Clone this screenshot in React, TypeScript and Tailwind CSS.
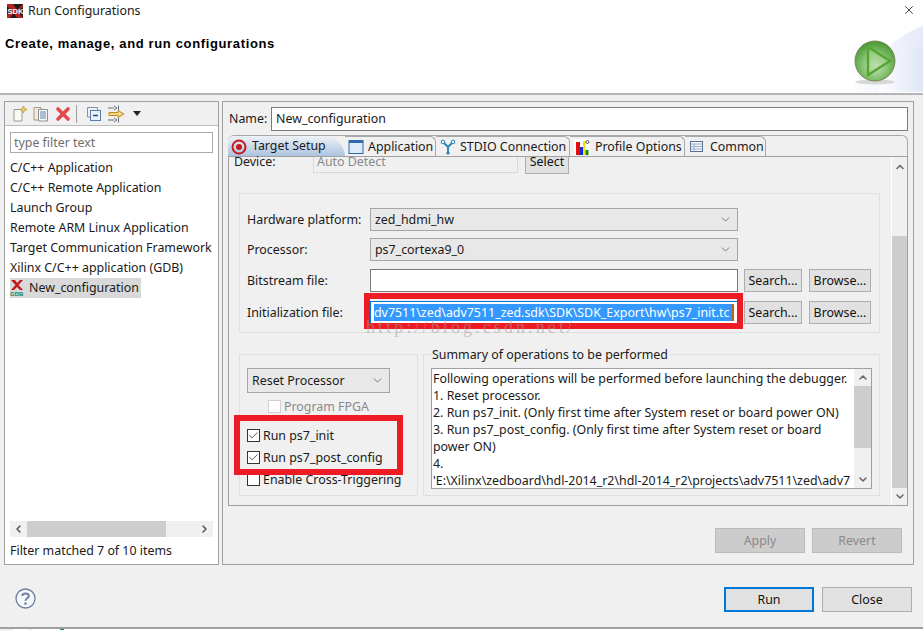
import React from 'react';
import { Check, ChevronDown, ChevronUp, ChevronLeft, ChevronRight, X } from 'lucide-react';

const btn = 'flex items-center justify-center border border-[#adadad] bg-[#e1e1e1] text-[#111] pt-[2px]';
const dimBtn = 'w-[90px] h-[25px] flex items-center justify-center border border-[#bcbcbc] bg-[#cccccc] text-[#8a8a8a] pt-[2px]';

function Field({ label, children }: { label: string; children: React.ReactNode }) {
  return (
    <div className="flex items-center h-[23px]">
      <span className="w-[123px] shrink-0 pt-[2px]">{label}</span>
      {children}
    </div>
  );
}

function Combo({ value, className }: { value: string; className: string }) {
  return (
    <div className={`flex items-center justify-between border border-[#a5a5a5] bg-[#e8e8e8] pl-[4px] pr-[5px] ${className}`}>
      <span className="pt-[2px]">{value}</span>
      <ChevronDown size={13} strokeWidth={1.4} className="text-[#555]" />
    </div>
  );
}

function Box({ checked, disabled }: { checked?: boolean; disabled?: boolean }) {
  return (
    <span className={`flex items-center justify-center w-[13px] h-[13px] shrink-0 border bg-white ${disabled ? 'border-[#d0d0d0]' : 'border-[#333]'}`}>
      {checked && <Check size={11} strokeWidth={1.8} className="text-[#333]" />}
    </span>
  );
}

function Tab({ className, icon, label }: { className: string; icon: React.ReactNode; label: string }) {
  return (
    <div className={`flex items-center h-[21px] shrink-0 whitespace-nowrap border-r border-t border-[#a8a8a8] rounded-tr-[6px] ${className}`}>
      {icon}
      <span>{label}</span>
    </div>
  );
}

function SdkIcon() {
  return (
    <svg width="16" height="16" viewBox="0 0 16 16">
      <rect x="0" y="1" width="16" height="14" fill="#1c1c1c" />
      <path d="M0 1 L6 1 L10 7 L16 1 L16 4 L11 8 L16 15 L10 15 L7 10 L3 15 L0 15 L0 12 L5 8 L0 3 Z" fill="#b4231c" />
      <text x="0.5" y="11" fontSize="7.5" fontWeight="700" fill="#fff" fontFamily="Liberation Sans, sans-serif">SDK</text>
    </svg>
  );
}

function PlayBanner() {
  return (
    <svg width="75" height="66" viewBox="0 0 75 66" className="block">
      <defs>
        <radialGradient id="orb" cx="50%" cy="62%" r="60%">
          <stop offset="0%" stopColor="#cfe8c4" />
          <stop offset="55%" stopColor="#83c070" />
          <stop offset="100%" stopColor="#4c9a33" />
        </radialGradient>
        <linearGradient id="wash" x1="0" y1="0" x2="1" y2="0">
          <stop offset="0%" stopColor="#ffffff" />
          <stop offset="100%" stopColor="#dfe5f6" />
        </linearGradient>
      </defs>
      <path d="M0 66 C20 40 45 10 75 0 L75 66 Z" fill="url(#wash)" opacity="0.8" />
      <path d="M30 66 C40 35 55 22 75 21 L75 66 Z" fill="url(#wash)" />
      <ellipse cx="27" cy="56" rx="20" ry="2.5" fill="#d8d8d8" />
      <circle cx="27" cy="35" r="20" fill="url(#orb)" stroke="#7b8a58" strokeWidth="1" />
      <path d="M20 21 L20 49 L42 35 Z" fill="#a9d698" fillOpacity="0.5" stroke="#55a52f" strokeWidth="2.4" />
    </svg>
  );
}

function TopIcons() {
  return (
    <div className="flex items-center h-[24px] pl-[6px] bg-[#f0f0f0] border-b border-[#bdbdbd]">
      <svg width="18" height="18" viewBox="0 0 18 18">
        <path d="M3 4.5 H11 V16 H3 Z" fill="#fbfbf2" stroke="#9a9a88" />
        <path d="M12.5 1 L13.5 3.5 L16 4.5 L13.5 5.5 L12.5 8 L11.5 5.5 L9 4.5 L11.5 3.5 Z" fill="#f3d35a" stroke="#b08a22" strokeWidth="0.7" />
      </svg>
      <svg width="18" height="18" viewBox="0 0 18 18" className="ml-[3px]">
        <path d="M2 2.5 H9 V15 H2 Z" fill="#f3ecd9" stroke="#a39a80" />
        <path d="M6.5 4.5 H15.5 V16 H6.5 Z" fill="#fbfbf6" stroke="#8c8f95" />
        <path d="M8 7 H14 M8 9 H14 M8 11 H14 M8 13 H14" stroke="#5a7fb8" />
      </svg>
      <svg width="16" height="16" viewBox="0 0 16 16" className="ml-[5px]">
        <path d="M3 3 L13 13 M13 3 L3 13" stroke="#e2484c" strokeWidth="3.6" strokeLinecap="round" />
      </svg>
      <span className="w-px h-[18px] bg-[#9e9e9e] ml-[5px]" />
      <svg width="16" height="16" viewBox="0 0 16 16" className="ml-[9px]">
        <path d="M1.5 1.5 H11.5 V4 M1.5 1.5 V11 H4" fill="none" stroke="#7d94b0" />
        <rect x="4.5" y="4.5" width="10" height="10" fill="#e9f0f8" stroke="#5c7da6" />
        <path d="M7 9.5 H12" stroke="#1f4f8a" strokeWidth="1.5" />
      </svg>
      <svg width="18" height="18" viewBox="0 0 18 18" className="ml-[6px]">
        <path d="M0 3 H6 M6 1 L9 3 L6 5 M10.5 0.5 V5.5 M0 15 H6 M6 13 L9 15 L6 17 M10.5 12.5 V17.5" fill="none" stroke="#5f6f7f" />
        <path d="M1 7.5 H10 V5.5 L16 9 L10 12.5 V10.5 H1 Z" fill="#f2d68a" stroke="#c48a18" />
      </svg>
      <svg width="8" height="5" viewBox="0 0 8 5" className="ml-[7px]"><path d="M0 0 H8 L4 5 Z" fill="#222" /></svg>
    </div>
  );
}

export default function App() {
  return (
    <div className="relative w-[923px] h-[631px] overflow-hidden bg-[#f0f0f0] flex flex-col text-[12.4px] text-[#1a1a1a] font-['Noto_Sans',sans-serif]">
      {/* banner */}
      <div className="h-[95px] shrink-0 bg-white border-b-2 border-[#b4b4b4] flex justify-between">
        <div className="pl-[5px]">
          <div className="flex items-center h-[21px] pl-[2px]">
            <SdkIcon />
            <span className="ml-[5px] pt-[2px]">Run Configurations</span>
          </div>
          <div className="mt-[13px] font-['Liberation_Sans',sans-serif] font-bold text-[13px] tracking-[0.64px] text-black">Create, manage, and run configurations</div>
        </div>
        <div className="flex flex-col items-end">
          <X size={14} strokeWidth={1.2} className="mr-[7px] mt-[3px] text-black" />
          <div className="mt-[9px]"><PlayBanner /></div>
        </div>
      </div>

      <div className="flex pl-[4px] pt-[6px] h-[470px] shrink-0">
        {/* left side */}
        <div className="w-[215px] h-[464px] border border-[#a0a0a0] bg-white flex flex-col">
          <TopIcons />
          <div className="mx-[5px] mt-[6px] h-[21px] border border-[#a9a9a9] px-[3px] pt-[1px] flex items-center text-[#6f6f6f]">type filter text</div>
          <div className="mt-[5px] px-[5px] flex-1 flex flex-col">
            {['C/C++ Application', 'C/C++ Remote Application', 'Launch Group', 'Remote ARM Linux Application', 'Target Communication Framework', 'Xilinx C/C++ application (GDB)'].map((t) => (
              <div key={t} className="h-[20px] flex items-center whitespace-nowrap">{t}</div>
            ))}
            <div className="h-[20px] w-[131px] flex items-center bg-[#d9d9d9]">
              <svg width="14" height="18" viewBox="0 0 14 18" className="shrink-0">
                <path d="M1 1 L5 1 L7 4 L10 1 L13 1 L8.5 6 L13 11 L10 11 L7 8 L4 11 L1 11 L5.5 6 Z" fill="#c4161c" />
                <text x="0" y="17" fontSize="6" fontWeight="700" fill="#1a7f3a" fontFamily="Liberation Sans, sans-serif">GDB</text>
              </svg>
              <span className="ml-[5px]">New_configuration</span>
            </div>
          </div>
          <div className="mx-[5px] h-[16px] bg-[#f0f0f0] flex items-center">
            <ChevronLeft size={12} strokeWidth={3} className="w-[17px] text-[#555]" />
            <div className="w-[139px] h-full bg-[#cdcdcd]" />
            <div className="flex-1" />
            <ChevronRight size={12} strokeWidth={3} className="w-[17px] text-[#555]" />
          </div>
          <div className="h-[27px] px-[5px] pt-[2px] flex items-center">Filter matched 7 of 10 items</div>
        </div>

        {/* right side */}
        <div className="ml-[3px] w-[692px] h-[464px] border border-[#a0a0a0] flex flex-col">
          <div className="flex items-center h-[24px] mt-[5px] pl-[6px]">
            <span className="w-[42px]">Name:</span>
            <div className="w-[637px] h-[24px] border border-[#7a7a7a] bg-white flex items-center pl-[4px]">New_configuration</div>
          </div>

          <div className="mt-[4px] ml-[5px] w-[680px] h-[371px] flex flex-col">
            {/* tabs */}
            <div className="flex h-[21px] shrink-0 border-r border-t border-[#a8a8a8] rounded-t-[6px] pl-0">
              <div className="flex items-center w-[117px] h-[21px] shrink-0 whitespace-nowrap rounded-tl-[6px] rounded-tr-[22px] bg-gradient-to-b from-[#eef2f7] to-[#a9c2de] pl-[3px]">
                <svg width="16" height="16" viewBox="0 0 16 16" className="shrink-0">
                  <circle cx="8" cy="8" r="6.5" fill="none" stroke="#c8171d" strokeWidth="2" />
                  <circle cx="8" cy="8" r="3" fill="#c8171d" />
                </svg>
                <span className="ml-[5px]">Target Setup</span>
              </div>
              <Tab className="w-[91px]" label="Application" icon={
                <svg width="16" height="16" viewBox="0 0 16 16" className="ml-[3px] mr-[4px] shrink-0">
                  <rect x="1" y="1.5" width="14" height="13" fill="#dcebf8" stroke="#2e6aa8" />
                  <rect x="1" y="1.5" width="14" height="2.5" fill="#2e6aa8" />
                </svg>
              } />
              <Tab className="w-[134px]" label="STDIO Connection" icon={
                <svg width="16" height="16" viewBox="0 0 16 16" className="mx-[4px] shrink-0">
                  <path d="M3 3 L8 8 L13 3 M8 8 V14" fill="none" stroke="#1f80b8" strokeWidth="1.8" />
                  <circle cx="3" cy="3" r="1.8" fill="#fff" stroke="#1f80b8" />
                  <circle cx="13" cy="3" r="1.8" fill="#fff" stroke="#1f80b8" />
                  <circle cx="8" cy="14" r="1.6" fill="#1f80b8" />
                </svg>
              } />
              <Tab className="w-[115px]" label="Profile Options" icon={
                <svg width="16" height="16" viewBox="0 0 16 16" className="ml-[4px] mr-[5px] shrink-0 bg-white">
                  <rect x="2" y="3" width="4" height="13" fill="#e60d0d" />
                  <rect x="6" y="8" width="3" height="8" fill="#1330d8" />
                  <rect x="9" y="2" width="2.5" height="14" fill="#f2e600" />
                  <rect x="11.5" y="11" width="3" height="5" fill="#128a12" />
                  <circle cx="13.5" cy="3" r="1.5" fill="none" stroke="#333" strokeWidth="0.8" />
                </svg>
              } />
              <Tab className="w-[81px]" label="Common" icon={
                <svg width="14" height="12" viewBox="0 0 14 12" className="ml-[5px] mr-[6px] shrink-0">
                  <rect x="0.5" y="0.5" width="12" height="10" fill="#f4f6fa" stroke="#5a6f96" />
                  <path d="M0.5 3 H12.5 M0.5 5.5 H12.5 M0.5 8 H12.5 M4 3 V10.5" stroke="#8a9cbc" strokeWidth="0.8" />
                </svg>
              } />
            </div>

            {/* tab body */}
            <div className="flex flex-1 min-h-0 border border-[#a0a0a0]">
              <div className="w-[662px] pl-[5px] flex flex-col">
                <div className="flex items-start h-[18px]">
                  <span className="w-[79px] leading-[10px]">Device:</span>
                  <div className="w-[205px] h-[16px] border border-t-0 border-[#d9d9d9] pl-[3px] text-[#8a8a8a] leading-[10px]">Auto Detect</div>
                  <div className="flex justify-center border border-t-0 border-[#adadad] bg-[#e1e1e1] text-[#111] ml-[7px] w-[44px] h-[17px] leading-[10px]">Select</div>
                </div>

                <div className="mt-[18px] ml-[5px] w-[641px] h-[140px] border border-[#e0e0e0] pt-[14px] pl-[7px] flex flex-col">
                  <Field label="Hardware platform:"><Combo value="zed_hdmi_hw" className="w-[368px] h-[23px]" /></Field>
                  <div className="mt-[7px]"><Field label="Processor:"><Combo value="ps7_cortexa9_0" className="w-[368px] h-[23px]" /></Field></div>
                  <div className="mt-[8px]">
                    <Field label="Bitstream file:">
                      <div className="w-[368px] h-[23px] border border-[#7a7a7a] bg-white" />
                      <div className={`${btn} ml-[6px] w-[58px] h-[23px]`}>Search...</div>
                      <div className={`${btn} ml-[7px] w-[62px] h-[23px]`}>Browse...</div>
                    </Field>
                  </div>
                  <div className="mt-[9px]">
                    <Field label="Initialization file:">
                      <div className="w-[368px] h-[23px] border border-[#0078d7] bg-white px-[3px] flex items-center">
                        <div className="w-full h-[17px] bg-[#3399ff] text-white leading-[17px] overflow-hidden whitespace-nowrap border-r-2 border-[#c06010]">dv7511\zed\adv7511_zed.sdk\SDK\SDK_Export\hw\ps7_init.tc</div>
                      </div>
                      <div className={`${btn} ml-[6px] w-[58px] h-[23px]`}>Search...</div>
                      <div className={`${btn} ml-[7px] w-[62px] h-[23px]`}>Browse...</div>
                    </Field>
                  </div>
                </div>

                <div className="mt-[21px] ml-[5px] flex gap-[5px]">
                  <div className="w-[179px] h-[142px] border border-[#e0e0e0] pt-[13px] pl-[7px] flex flex-col">
                    <Combo value="Reset Processor" className="w-[143px] h-[25px]" />
                    <div className="flex items-center h-[22px] mt-[2px] pl-[21px] text-[#8a8a8a]"><Box disabled /><span className="ml-[3px] pt-[2px]">Program FPGA</span></div>
                    <div className="flex items-center h-[22px] mt-[7px]"><Box checked /><span className="ml-[3px] pt-[2px]">Run ps7_init</span></div>
                    <div className="flex items-center h-[22px]"><Box checked /><span className="ml-[3px] pt-[2px]">Run ps7_post_config</span></div>
                    <div className="flex items-center h-[22px]"><Box /><span className="ml-[3px] pt-[2px]">Enable Cross-Triggering</span></div>
                  </div>
                  <div className="relative w-[457px] h-[142px] border border-[#e0e0e0] pt-[13px] pl-[7px]">
                    <span className="absolute left-[7px] -top-[9px] bg-[#f0f0f0] px-[1px] leading-[17px]">Summary of operations to be performed</span>
                    <div className="w-[441px] h-[121px] border border-[#a0a0a0] bg-white flex">
                      <div className="w-[422px] pl-[1px] pt-[1px] leading-[17px] overflow-hidden whitespace-nowrap">
                        <div>Following operations will be performed before launching the debugger.</div>
                        <div>1. Reset processor.</div>
                        <div>2. Run ps7_init. (Only first time after System reset or board power ON)</div>
                        <div>3. Run ps7_post_config. (Only first time after System reset or board</div>
                        <div>power ON)</div>
                        <div>4.</div>
                        <div>'E:\Xilinx\zedboard\hdl-2014_r2\hdl-2014_r2\projects\adv7511\zed\adv7</div>
                      </div>
                      <div className="flex-1 bg-[#f0f0f0] flex flex-col items-center">
                        <ChevronUp size={12} strokeWidth={3} className="h-[17px] text-[#666]" />
                        <div className="w-full h-[62px] bg-[#cdcdcd]" />
                        <div className="flex-1" />
                        <ChevronDown size={12} strokeWidth={3} className="h-[17px] text-[#666]" />
                      </div>
                    </div>
                  </div>
                </div>
              </div>

              {/* outer scrollbar */}
              <div className="ml-[1px] w-[16px] flex flex-col items-center bg-[#f0f0f0] border-l border-white">
                <ChevronUp size={12} strokeWidth={3} className="h-[20px] text-[#666]" />
                <div className="w-full h-[59px]" />
                <div className="w-full flex-1 bg-[#cdcdcd]" />
                <ChevronDown size={12} strokeWidth={3} className="h-[17px] text-[#666]" />
              </div>
            </div>
          </div>

          <div className="flex justify-end gap-[7px] mt-[22px] pr-[11px]">
            <div className={dimBtn}>Apply</div>
            <div className={dimBtn}>Revert</div>
          </div>
        </div>
      </div>

      {/* footer */}
      <div className="flex items-center h-[64px] shrink-0 border-b-2 border-[#a0a0a0] pt-[7px] pl-[15px] pr-[11px]">
        <svg width="21" height="21" viewBox="0 0 21 21" className="-mt-[3px]">
          <circle cx="10.5" cy="10.5" r="9.5" fill="#f5f7fa" stroke="#6d7f9c" strokeWidth="1.3" />
          <path d="M7.2 8 C7.2 4.5 13.8 4.5 13.8 8 C13.8 10.5 10.5 10 10.5 12.8" fill="none" stroke="#71829e" strokeWidth="2" />
          <circle cx="10.5" cy="15.6" r="1.3" fill="#71829e" />
        </svg>
        <div className="flex-1" />
        <div className="w-[90px] h-[25px] flex items-center justify-center border-2 border-[#0078d7] bg-[#e1e1e1] text-[#111] pt-[2px]">Run</div>
        <div className={`${btn} ml-[8px] w-[90px] h-[25px]`}>Close</div>
      </div>
      <div className="flex-1 bg-white flex">
        <div className="w-[13px] bg-[#f0f0f0]" />
        <div className="ml-[17px] w-px bg-[#e0e0e0]" />
        <div className="ml-[29px] w-[4px] h-[1px] bg-[#128a6a]" />
      </div>

      {/* red annotations + watermark sit on top of the shot */}
      <div className="absolute left-[364px] top-[293px] w-[379px] h-[36px] border-[6px] border-[#ed1c24]" />
      <div className="absolute left-[234px] top-[415px] w-[169px] h-[60px] border-[6px] border-[#ed1c24]" />
      <div className="absolute left-[366px] top-[314px] font-['Liberation_Serif',serif] text-[18px] tracking-[3.1px] text-[#9a9a9a]/50 whitespace-nowrap">http://blog.csdn.net/</div>
    </div>
  );
}
